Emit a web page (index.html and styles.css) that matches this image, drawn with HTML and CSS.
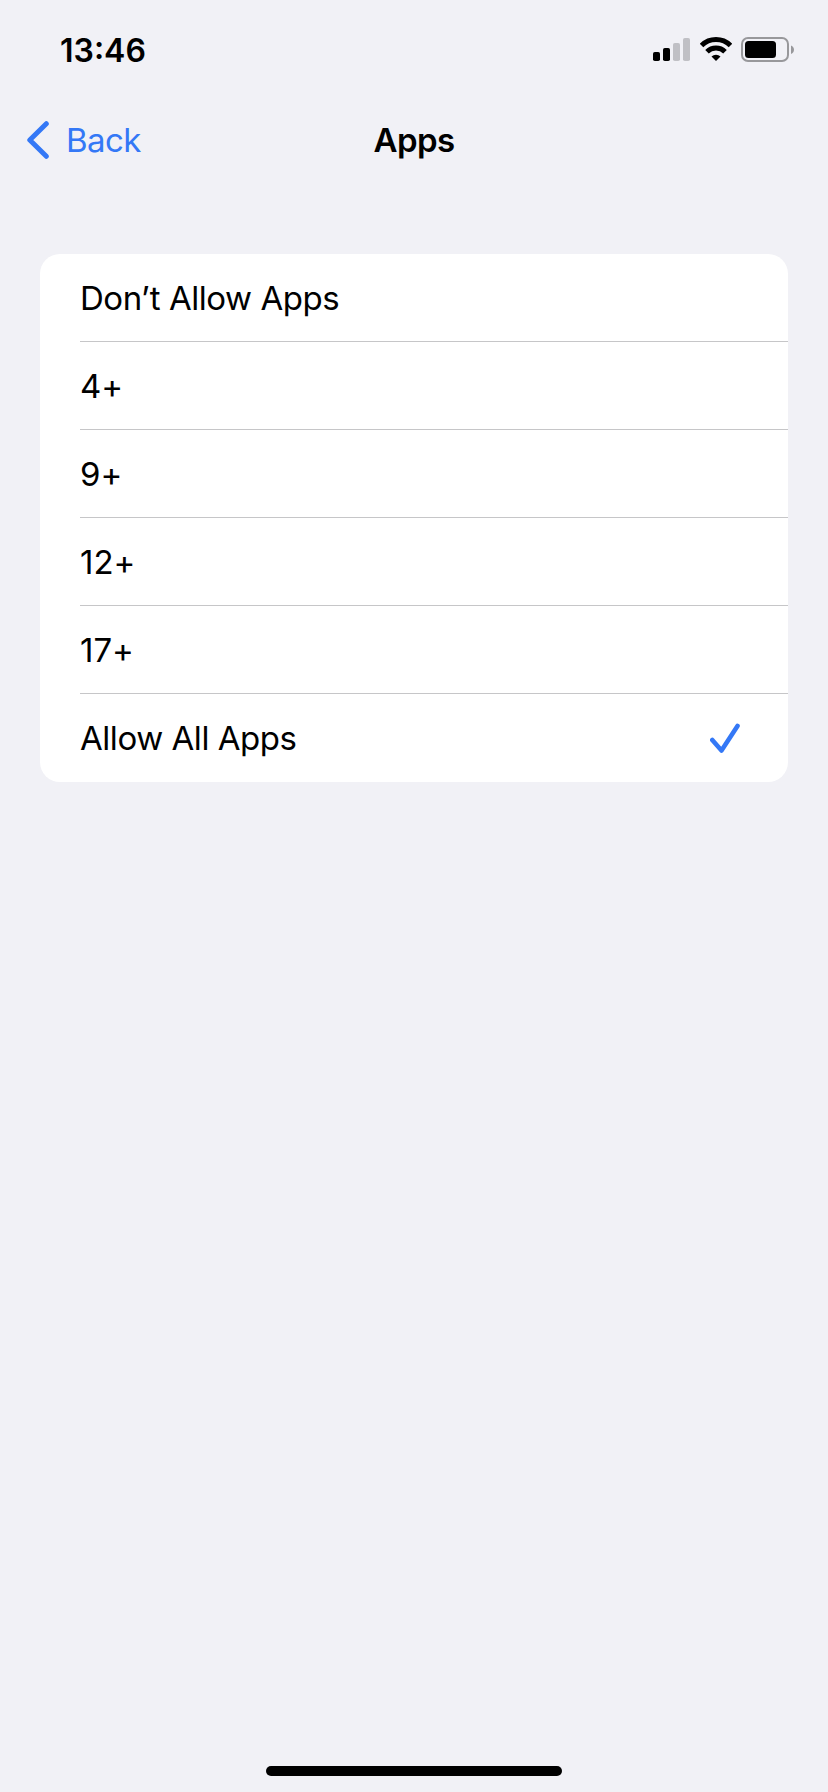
FILE: index.html
```html
<!DOCTYPE html>
<html lang="en">
<head>
    <meta charset="UTF-8">
    <meta name="viewport" content="width=device-width, initial-scale=1.0">
    <title>Apps</title>
    <link rel="stylesheet" href="styles.css">
</head>
<body>
    <div class="screen">
        <div class="status-bar">
            <span class="time">13:46</span>
            <div class="status-icons">
                <svg width="37" height="26" viewBox="0 0 37 26">
                    <rect x="0" y="15" width="7" height="9" rx="1.8" fill="#000"/>
                    <rect x="10" y="11" width="7" height="13" rx="1.8" fill="#000"/>
                    <rect x="20" y="6" width="7" height="18" rx="1.8" fill="#c0c0c5"/>
                    <rect x="30" y="1" width="7" height="23" rx="1.8" fill="#c0c0c5"/>
                </svg>
                <svg width="32" height="26" viewBox="0 0 32 26">
                    <path d="M1.500 8.600a20.500 20.500 0 0 1 29 0" fill="none" stroke="#000" stroke-width="5"/>
                    <path d="M7 14.800a12.700 12.700 0 0 1 18 0" fill="none" stroke="#000" stroke-width="5"/>
                    <path d="M16 24l-4.500-4.500a6.400 6.400 0 0 1 9 0z" fill="#000"/>
                </svg>
                <svg width="54" height="26" viewBox="0 0 54 26">
                    <rect x="1" y="1" width="46" height="23" rx="6" fill="none" stroke="#98989b" stroke-width="2"/>
                    <rect x="4" y="4" width="31" height="17" rx="3.5" fill="#000"/>
                    <path d="M50 8.500c4 1.600 4 6.900 0 8.500z" fill="#98989b"/>
                </svg>
            </div>
        </div>
        <div class="nav-bar">
            <a class="back" href="#">
                <svg width="22" height="38" viewBox="0 0 22 38">
                    <path d="M19.300 2.700L2.800 19l16.500 16.300" fill="none" stroke="#3478f6" stroke-width="5" stroke-linecap="round" stroke-linejoin="round"/>
                </svg>
                <span>Back</span>
            </a>
            <h1 class="title">Apps</h1>
        </div>
        <ul class="list">
            <li class="item">Don’t Allow Apps</li>
            <li class="item rating">4+</li>
            <li class="item rating">9+</li>
            <li class="item rating">12+</li>
            <li class="item rating">17+</li>
            <li class="item">
                Allow All Apps
                <svg width="30" height="30" viewBox="0 0 30 30">
                    <path d="M2.300 17L11.500 27.500 27.500 3" fill="none" stroke="#3478f6" stroke-width="4.600" stroke-linecap="round" stroke-linejoin="round"/>
                </svg>
            </li>
        </ul>
        <div class="home-indicator"></div>
    </div>
</body>
</html>
```

FILE: styles.css
```css
* {
    margin: 0;
    padding: 0;
    box-sizing: border-box;
    font-family: Inter, "Liberation Sans", sans-serif;
}
.screen {
    width: 100%;
    height: 100vh;
    display: flex;
    flex-direction: column;
    background-color: #f1f1f6;
    color: #000;
}
.status-bar {
    height: 100px;
    padding: 0 33px 0 60px;
    display: flex;
    justify-content: space-between;
    align-items: center;
}
.time {
    font-size: 32px;
    font-weight: 600;
}
.status-icons {
    display: flex;
    gap: 9.5px;
}
.nav-bar {
    height: 80px;
    padding: 0 27px;
    display: grid;
    grid-template-columns: 1fr auto 1fr;
    align-items: center;
}
.back {
    display: flex;
    align-items: center;
    gap: 17px;
    color: #3478f6;
    font-size: 33px;
    letter-spacing: -0.6px;
    text-decoration: none;
}
.title {
    font-size: 33px;
    font-weight: 600;
    letter-spacing: -0.6px;
}
.list {
    margin: 74px 40px 0;
    border-radius: 20px;
    background-color: #fff;
    list-style: none;
}
.item {
    height: 88px;
    margin-left: 40px;
    padding-right: 48px;
    display: flex;
    justify-content: space-between;
    align-items: center;
    border-bottom: 1px solid #c6c6c8;
    font-size: 33px;
    letter-spacing: -0.45px;
}
.item:last-child {
    border-bottom: none;
}
/* keep the plus on the baseline instead of raised next to digits */
.rating {
    letter-spacing: 0;
    font-feature-settings: "calt" 0;
}
.home-indicator {
    width: 296px;
    height: 10px;
    margin: auto auto 16px;
    border-radius: 5px;
    background-color: #000;
}
```
